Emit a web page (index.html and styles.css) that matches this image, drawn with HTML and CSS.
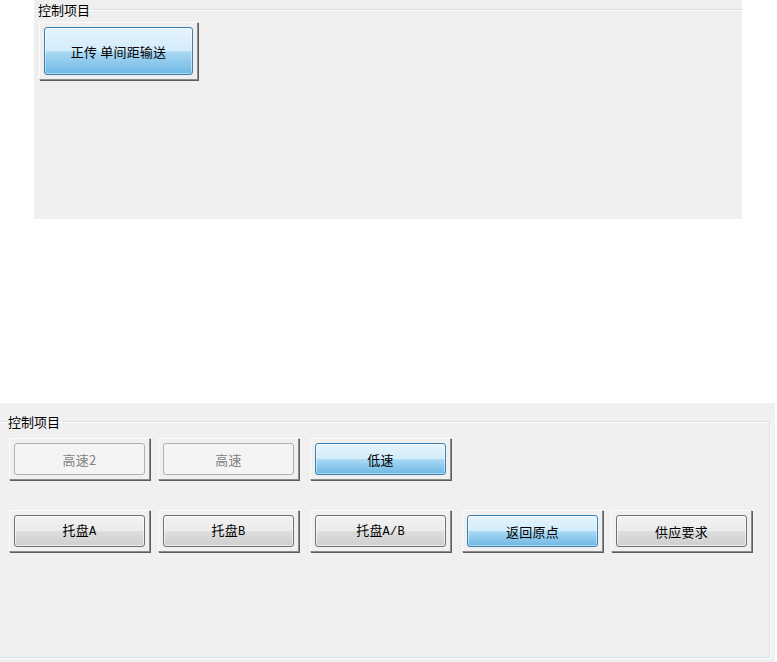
FILE: index.html
```html
<!DOCTYPE html>
<html lang="zh-CN">
<head>
<meta charset="utf-8">
<title>控制项目</title>
<link rel="stylesheet" href="styles.css">
</head>
<body>
  <section class="panel panel-top">
    <fieldset class="group group-top">
      <legend class="group-label">控制项目</legend>
      <div class="frame frame-wide">
        <button class="btn btn-blue"><span class="cap">正传 单间距输送</span></button>
      </div>
    </fieldset>
  </section>

  <div class="spacer"></div>

  <section class="panel panel-bottom">
    <fieldset class="group group-bottom">
      <legend class="group-label">控制项目</legend>
      <div class="row row-1">
        <div class="frame f1"><button class="btn btn-disabled"><span class="cap">高速2</span></button></div>
        <div class="frame f2"><button class="btn btn-disabled"><span class="cap">高速</span></button></div>
        <div class="frame f3"><button class="btn btn-blue"><span class="cap">低速</span></button></div>
      </div>
      <div class="row row-2">
        <div class="frame f1"><button class="btn btn-gray"><span class="cap">托盘<span class="lat">A</span></span></button></div>
        <div class="frame f2"><button class="btn btn-gray"><span class="cap">托盘<span class="lat">B</span></span></button></div>
        <div class="frame f3"><button class="btn btn-gray"><span class="cap">托盘<span class="lat">A/B</span></span></button></div>
        <div class="frame f4"><button class="btn btn-blue"><span class="cap">返回原点</span></button></div>
        <div class="frame f5"><button class="btn btn-gray"><span class="cap">供应要求</span></button></div>
      </div>
    </fieldset>
  </section>
</body>
</html>
```
FILE: styles.css
```css
html, body {
  margin: 0;
  padding: 0;
  background: #ffffff;
}

body {
  width: 777px;
  height: 662px;
  overflow: hidden;
  font-family: "Noto Sans CJK SC", "Noto Sans", sans-serif;
  font-size: 13px;
  color: #000;
}

.panel {
  background: #efefef;
  overflow: hidden;
  box-sizing: border-box;
}

.panel-top {
  margin-left: 34px;
  width: 708px;
  height: 219px;
}

.spacer {
  height: 184px;
}

.panel-bottom {
  width: 775px;
  height: 259px;
  padding-top: 10px;
  background: #f0f0f0;
}

.group {
  margin: 0;
  min-width: 0;
  box-sizing: border-box;
}

.group-label {
  font-size: 13px;
  line-height: 17px;
  padding: 0 3px 0 0;
  margin-left: -1px;
  color: #000;
}

.group-top {
  border: none;
  border-top: 1px solid #d5dfe5;
  box-shadow: inset 0 1px 0 #ffffff;
  padding: 4px 0 0 5px;
  margin-top: 1px;
  height: 260px;
}

.group-bottom {
  border: 1px solid #d5dfe5;
  border-left: none;
  border-radius: 0 3px 3px 0;
  box-shadow: inset 0 1px 0 #ffffff, 1px 1px 0 #ffffff;
  width: 770px;
  height: 245px;
  padding: 8px 0 0 9px;
}

.row {
  display: flex;
}

.row-2 {
  margin-top: 30px;
}

.frame {
  box-sizing: border-box;
  width: 141px;
  height: 42px;
  padding: 4px;
  border: 1px solid;
  border-color: #fbfbfb #8c8c8c #8c8c8c #fbfbfb;
  box-shadow: 1px 1px 0 #5e5e5e;
  display: flex;
}

.frame-wide {
  width: 159px;
  height: 58px;
}

.f2 { margin-left: 8px; }
.f3 { margin-left: 11px; }
.f4 { margin-left: 11px; }
.f5 { margin-left: 8px; }

.btn {
  flex: 1;
  margin: 0;
  padding: 0;
  border-radius: 3px;
  font-family: "Noto Sans CJK SC", "Noto Sans", sans-serif;
  font-size: 13px;
  line-height: 17px;
  color: #000;
  display: flex;
  align-items: center;
  justify-content: center;
  box-sizing: border-box;
}

.cap {
  display: block;
  white-space: nowrap;
  letter-spacing: 0.2px;
}

.btn-blue {
  border: 1px solid #3c7fb1;
  background: linear-gradient(to bottom, #e6f4fc 0%, #d2ecfa 50%, #a9d9f4 52%, #6eb7e3 100%);
  box-shadow: inset 0 0 0 1px rgba(255, 255, 255, 0.45);
}

.btn-gray {
  border: 1px solid #707070;
  background: linear-gradient(to bottom, #f2f2f2 0%, #ebebeb 50%, #dddddd 52%, #cfcfcf 100%);
  box-shadow: inset 0 0 0 1px rgba(255, 255, 255, 0.6);
}

.btn-disabled {
  border: 1px solid #adb2b5;
  background: #f4f4f4;
  color: #838383;
}

.lat {
  font-family: "Liberation Mono", monospace;
  font-size: 12px;
}
```
